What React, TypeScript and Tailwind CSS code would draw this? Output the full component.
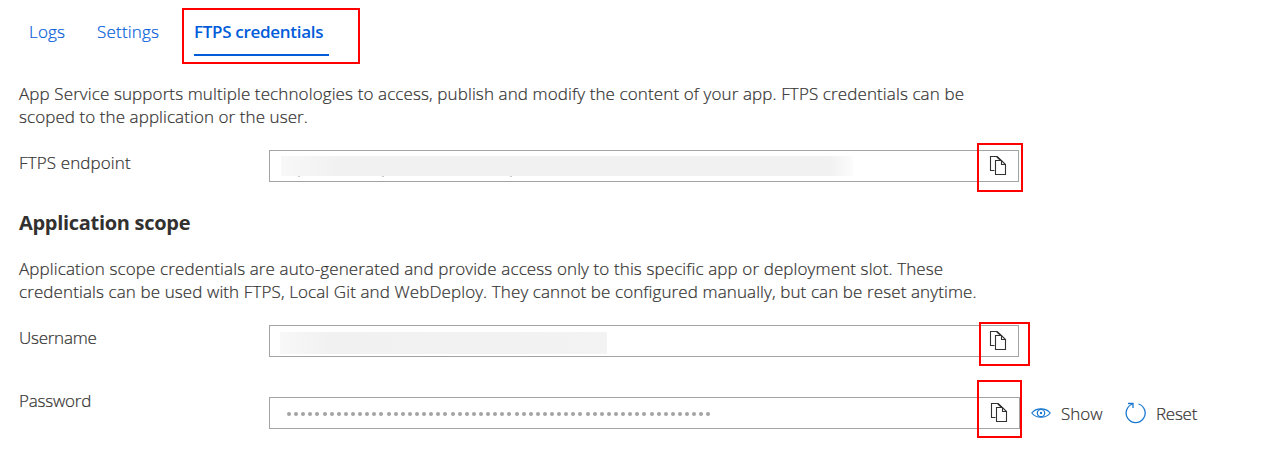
import React from "react";

function CopyIcon() {
  return (
    <svg width="18" height="20" viewBox="0 0 18 20" fill="none" stroke="#323130" strokeWidth="1.1">
      <path d="M5.5 14.5H1.5V.5H8L12 4.5" />
      <path d="M6.5 4.5H12.5L16.5 8.5V18.5H6.5Z" fill="#fff" />
      <path d="M12.5 4.5V8.5H16.5" />
      <path d="M8 .8L12 4.5" strokeWidth="1.6" />
    </svg>
  );
}

function EyeIcon() {
  return (
    <svg width="20" height="12" viewBox="0 0 20 12" fill="none" stroke="#1a78d0" strokeWidth="1.2">
      <path d="M.8 6C5 .4 15 .4 19.2 6C15 11.6 5 11.6 .8 6Z" />
      <circle cx="10" cy="6" r="3.7" />
      <circle cx="10" cy="6" r="1.2" fill="#1a78d0" stroke="none" />
    </svg>
  );
}

function ResetIcon() {
  return (
    <svg width="22" height="22" viewBox="0 0 22 22" fill="none" stroke="#1a78d0" strokeWidth="1.3">
      <path d="M13.5 2A9.5 9.5 0 1 1 7.8 2" />
      <path d="M3 1.5H8V6" />
    </svg>
  );
}

function Field({ label, labelClass, top, box, mark, icon, children, actions }: {
  label: string; labelClass: string; top: string; box: string; mark: string; icon: string;
  children: React.ReactNode; actions?: React.ReactNode;
}) {
  return (
    <div className={`flex h-8 ${top}`}>
      <div className="w-[250px] shrink-0">
        <span className={`block whitespace-nowrap leading-6 ${labelClass}`}>{label}</span>
      </div>
      <div className={`relative flex h-8 shrink-0 justify-between border border-[#a3a3a3] ${box}`}>
        {children}
        <span className={icon}><CopyIcon /></span>
        <span className={`absolute border-2 border-[#f00] ${mark}`} />
      </div>
      {actions}
    </div>
  );
}

export default function App() {
  return (
    <main className="h-[471px] w-[1281px] overflow-hidden bg-white pl-[19px] font-['Open_Sans',sans-serif] text-[17px] font-light text-[#323130] [-webkit-text-stroke:0.2px]">
      <nav className="flex h-16 pl-[10px] pt-[20px] leading-6 text-[#015cda]">
        <span className="w-[68px] whitespace-nowrap tracking-[0.2px]">Logs</span>
        <span className="w-[97px] whitespace-nowrap tracking-[0.2px]">Settings</span>
        <span className="relative h-9 w-[135px] whitespace-nowrap border-b-2 border-[#015cda] font-semibold tracking-[-0.3px] [-webkit-text-stroke:0px]">
          FTPS credentials
          <i className="absolute -left-[12px] -top-[12px] h-14 w-[178px] border-2 border-[#f00]" />
        </span>
      </nav>
      <p className="mt-[18px] whitespace-nowrap leading-[23px]">
        <span className="block tracking-[0.112px]">App Service supports multiple technologies to access, publish and modify the content of your app. FTPS credentials can be</span>
        <span className="block tracking-[0.08px]">scoped to the application or the user.</span>
      </p>
      <Field label="FTPS endpoint" labelClass="pt-px tracking-[0.12px]" top="mt-[22px]" box="w-[750px]" mark="left-[707px] -top-[8px] h-[49px] w-[46px]" icon="mr-[11px] mt-[5px]">
        <span className="relative ml-[11px] mt-[5px] h-5 w-[572px] bg-linear-to-r from-[#f8f8f8] via-[#f1f1f1] via-10% to-[#f1f1f1]">
          <i className="absolute left-[17px] top-5 h-px w-[2px] bg-[#c8c8c8]" />
          <i className="absolute left-[101px] top-5 h-px w-[2px] bg-[#c8c8c8]" />
          <i className="absolute left-[229px] top-5 h-px w-[2px] bg-[#c8c8c8]" />
          <i className="absolute right-0 top-0 h-5 w-6 bg-linear-to-r from-[#f1f1f1] to-[#fcfcfc]" />
        </span>
      </Field>
      <h2 className="mt-[29px] whitespace-nowrap text-[20px] font-bold leading-6 tracking-[-0.3px] text-[#323130] [-webkit-text-stroke:0px]">Application scope</h2>
      <p className="mt-[22px] whitespace-nowrap leading-[23px]">
        <span className="block tracking-[0.115px]">Application scope credentials are auto-generated and provide access only to this specific app or deployment slot. These</span>
        <span className="block tracking-[0.105px]">credentials can be used with FTPS, Local Git and WebDeploy. They cannot be configured manually, but can be reset anytime.</span>
      </p>
      <Field label="Username" labelClass="pt-px tracking-[-0.25px]" top="mt-[22px]" box="w-[750px]" mark="left-[709px] -top-[4px] h-[44px] w-[51px]" icon="mr-[11px] mt-[5px]">
        <span className="ml-[10px] mt-[6px] h-[22px] w-[327px] bg-linear-to-r from-[#f8f8f8] via-[#f1f1f1] via-15% to-[#f3f3f3]" />
      </Field>
      <Field
        label="Password" labelClass="-mt-[8px] tracking-[-0.2px]" top="mt-[40px]" box="w-[751px]" mark="left-[707px] -top-[18px] h-[58px] w-[45px]" icon="mr-[11px] mt-[5px]"
        actions={
          <div className="flex h-8 items-center whitespace-nowrap">
            <span className="ml-[11px]"><EyeIcon /></span>
            <span className="ml-[10px] w-[63px] pt-px">Show</span>
            <span className="ml-px"><ResetIcon /></span>
            <span className="ml-[9px] pt-px tracking-[-0.25px]">Reset</span>
          </div>
        }
      >
        <span className="ml-[17px] mt-[14px] flex gap-[3.11px]">
          {Array.from({ length: 60 }, (_, i) => <i key={i} className="h-1 w-1 rounded-full bg-[#a3a3a3]" />)}
        </span>
      </Field>
    </main>
  );
}
